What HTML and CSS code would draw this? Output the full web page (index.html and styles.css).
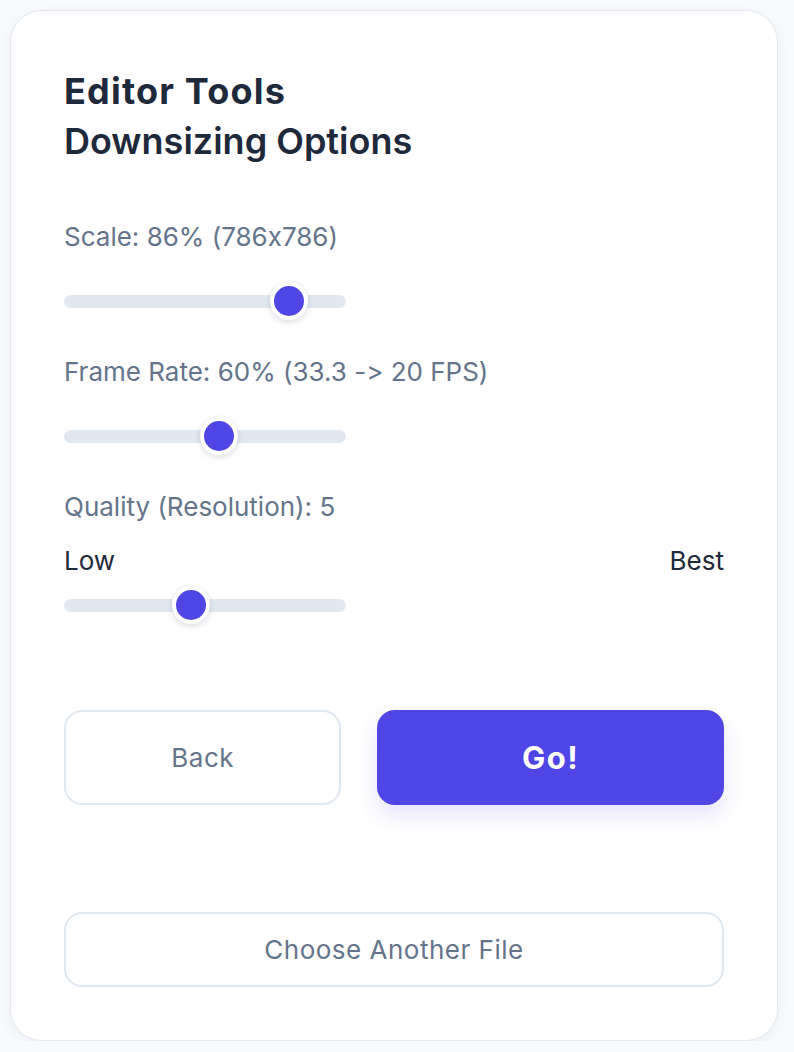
FILE: index.html
```html
<!DOCTYPE html>
<html lang="en">
<head>
<meta charset="utf-8">
<title>Editor Tools</title>
<link rel="stylesheet" href="styles.css">
</head>
<body>
<main class="card">
  <h1 class="title"><span class="title-main">Editor Tools</span><span class="subtitle">Downsizing Options</span></h1>

  <div class="field field-first">
    <label class="label" for="scale">Scale: 86% (786x786)</label>
    <div class="slider-wrap"><input class="slider" id="scale" type="range" min="10" max="100" value="86"></div>
  </div>

  <div class="field">
    <label class="label" for="fps">Frame Rate: 60% (33.3 -&gt; 20 FPS)</label>
    <div class="slider-wrap"><input class="slider" id="fps" type="range" min="10" max="100" value="60"></div>
  </div>

  <div class="field">
    <label class="label" for="quality">Quality (Resolution): 5</label>
    <div class="scale-ends"><span>Low</span><span>Best</span></div>
    <div class="slider-wrap slider-tight"><input class="slider" id="quality" type="range" min="1" max="10" value="5"></div>
  </div>

  <div class="actions">
    <button class="btn btn-outline" type="button">Back</button>
    <button class="btn btn-primary" type="button">Go!</button>
  </div>

  <button class="btn btn-outline btn-wide" type="button">Choose Another File</button>
</main>
</body>
</html>
```

FILE: styles.css
```css
* { box-sizing: border-box; }

html, body {
  margin: 0;
  background: #f8fafc;
}

body {
  padding: 10px 16px 0 10px;
  font-family: "Inter", "Noto Sans", sans-serif;
  font-feature-settings: "calt" 0;
  color: #1e293b;
}

.card {
  width: 768px;
  background: #ffffff;
  border: 1px solid #e2e8f0;
  border-radius: 32px;
  padding: 55px 53px 53px;
  box-shadow: 0 4px 14px rgba(15, 23, 42, 0.05);
}

.title {
  margin: 0;
  font-size: 36px;
  line-height: 50px;
  font-weight: 700;
  color: #1e293b;
}

.title-main {
  display: block;
  letter-spacing: 1.2px;
}

.subtitle {
  display: block;
  font-weight: 600;
}

.field { margin-top: 36px; }
.field-first { margin-top: 55px; }

.label {
  display: block;
  font-size: 26px;
  line-height: 32px;
  color: #64748b;
}

.slider-wrap {
  margin-top: 29px;
  height: 38px;
  display: flex;
  align-items: center;
}
.slider-tight { margin-top: 9px; }

.scale-ends {
  margin-top: 22px;
  display: flex;
  justify-content: space-between;
  font-size: 26px;
  line-height: 32px;
  color: #1e293b;
}

.slider {
  -webkit-appearance: none;
  appearance: none;
  margin: 0;
  width: 282px;
  height: 13px;
  border-radius: 7px;
  background: #e2e8f0;
  outline: none;
}

.slider::-webkit-slider-thumb {
  -webkit-appearance: none;
  appearance: none;
  width: 38px;
  height: 38px;
  border-radius: 50%;
  background: #4f46e5;
  border: 4px solid #ffffff;
  box-shadow: 0 2px 6px rgba(15, 23, 42, 0.15);
}

.actions {
  margin-top: 86px;
  display: grid;
  grid-template-columns: 4fr 5fr;
  gap: 36px;
}

.btn {
  font-family: inherit;
  font-feature-settings: "calt" 0;
  font-size: 26px;
  letter-spacing: 0.5px;
  border-radius: 18px;
  cursor: pointer;
}

.btn-outline {
  height: 95px;
  background: #ffffff;
  border: 2px solid #e2e8f0;
  color: #64748b;
}

.btn-primary {
  height: 95px;
  background: #4f46e5;
  border: none;
  color: #ffffff;
  font-size: 31px;
  font-weight: 700;
  letter-spacing: 1.5px;
  box-shadow: 0 10px 20px rgba(79, 70, 229, 0.15);
}

.btn-wide {
  display: block;
  width: 100%;
  height: 75px;
  margin-top: 107px;
}
```
